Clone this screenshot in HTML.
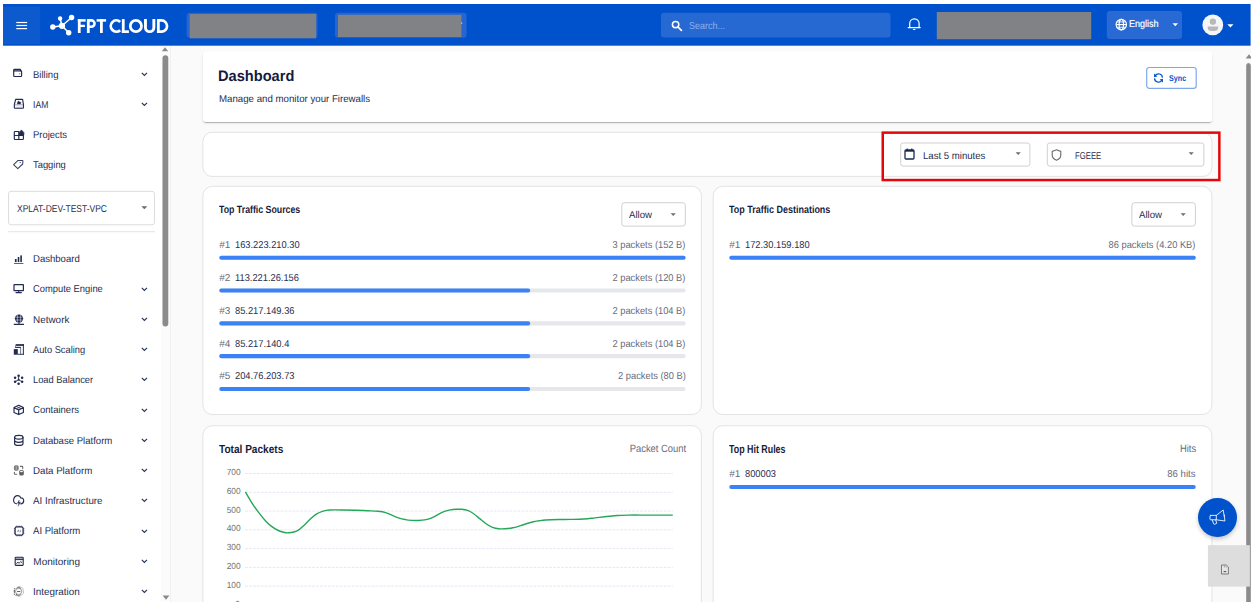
<!DOCTYPE html>
<html><head><meta charset="utf-8"><title>Dashboard</title>
<style>
html,body{margin:0;padding:0;background:#fff;}
body{width:1252px;height:608px;position:relative;overflow:hidden;font-family:"Liberation Sans",sans-serif;}
.b{position:absolute;box-sizing:border-box;display:block;}
.t{position:absolute;white-space:nowrap;line-height:1;font-family:"Liberation Sans",sans-serif;text-rendering:geometricPrecision;}
</style></head><body>
<svg class="b" style="left:2px;top:3px" width="1250" height="600"><rect x="1.00" y="1.00" width="1248.00" height="598.00" fill="#fafafa"/></svg>
<svg class="b" style="left:2px;top:45px" width="160" height="558"><rect x="1.00" y="1.00" width="158.00" height="556.00" fill="#fff"/></svg>
<div class="b" style="left:161.00px;top:46.00px;width:9.50px;height:556.00px;background:#fbfbfb;border-right:1px solid #f0f0f0;"></div>
<svg class="b" style="left:2px;top:3px" width="1250" height="44"><rect x="1.00" y="1.00" width="1247.60" height="41.70" fill="#0052cc"/></svg>
<svg class="b" style="left:2px;top:5px" width="40" height="40"><rect x="1.00" y="1.60" width="37.20" height="37.40" fill="#0d5acf"/></svg>
<svg class="b" style="left:15px;top:20px" width="14" height="5"><rect x="1.30" y="1.90" width="10.80" height="1.20" fill="#fff"/></svg>
<svg class="b" style="left:15px;top:23px" width="14" height="5"><rect x="1.30" y="1.90" width="10.80" height="1.20" fill="#fff"/></svg>
<svg class="b" style="left:15px;top:27px" width="14" height="4"><rect x="1.30" y="1.00" width="10.80" height="1.20" fill="#fff"/></svg>
<svg class="b" style="left:46px;top:10px" width="36" height="30" viewBox="46 10 36 30"><g stroke="#fff" stroke-width="1.5" fill="none"><line x1="62" y1="25.8" x2="71.6" y2="17.5"/><line x1="62" y1="25.8" x2="60.1" y2="18.5"/><line x1="62" y1="25.8" x2="52.8" y2="27"/><line x1="62" y1="25.8" x2="68.7" y2="32.7"/></g><g fill="#fff"><circle cx="62" cy="25.8" r="3.15"/><circle cx="71.6" cy="17.5" r="2.7"/><circle cx="60.1" cy="18.5" r="2.2"/><circle cx="52.8" cy="27" r="2.7"/><circle cx="68.7" cy="32.7" r="2.7"/></g></svg>
<svg class="b" style="left:74px;top:14px" width="100" height="24" viewBox="74 14 100 24"><g fill="none" stroke="#fff" stroke-width="2.8"><path d="M79.25 19.1 V33"/><path d="M77.85 20.4 H85.7" stroke-width="2.5"/><path d="M79 25.9 H84.9" stroke-width="2.3"/><path d="M88.3 19.1 V33"/><path d="M88.3 20.4 H91.4 A3.15 3.15 0 0 1 91.4 26.7 H88.3" stroke-width="2.6"/><path d="M96.6 20.4 H106.1" stroke-width="2.5"/><path d="M101.4 19.1 V33"/><path d="M120.14 21.95 A5.55 5.6 0 1 0 120.14 30.15"/><path d="M123.25 19.1 V33"/><path d="M121.85 31.65 H128.9" stroke-width="2.7"/><ellipse cx="135.9" cy="26.05" rx="5.6" ry="5.65"/><path d="M145.45 19.1 V27.4 A4.2 4.25 0 0 0 153.85 27.4 V19.1" stroke-width="2.9"/><path d="M158.35 19.1 V33"/><path d="M158.35 20.45 H161.5 A5.55 5.6 0 0 1 161.5 31.65 H158.35" stroke-width="2.7"/></g></svg>
<svg class="b" style="left:185px;top:11px" width="134" height="28"><rect x="1.60" y="1.80" width="130.90" height="25.00" fill="#2566d3" rx="3.00"/></svg>
<svg class="b" style="left:188px;top:13px" width="130" height="27"><rect x="1.70" y="1.00" width="126.50" height="24.30" fill="#808285"/></svg>
<svg class="b" style="left:334px;top:11px" width="134" height="28"><rect x="1.00" y="1.80" width="131.50" height="25.00" fill="#2566d3" rx="3.00"/></svg>
<svg class="b" style="left:337px;top:13px" width="126" height="25"><rect x="1.00" y="1.80" width="123.40" height="22.20" fill="#808285"/></svg>
<svg class="b" style="left:460px;top:21px" width="4" height="4"><rect x="1.20" y="1.50" width="1.00" height="1.20" fill="#dfe8f8"/></svg>
<svg class="b" style="left:660px;top:11px" width="232" height="28"><rect x="1.00" y="1.80" width="229.50" height="24.80" fill="#2769d3" rx="3.00"/></svg>
<svg class="b" style="left:671.00px;top:19.50px;" width="12" height="12" viewBox="0 0 12 12"><circle cx="4.6" cy="4.6" r="3.2" fill="none" stroke="#fff" stroke-width="1.5"/><line x1="7" y1="7" x2="10.4" y2="10.4" stroke="#fff" stroke-width="1.7" stroke-linecap="round"/></svg>
<div class="t" style="left:689.40px;transform-origin:0 0;top:21px;font-size:10px;font-weight:400;color:#8fb1ea;transform:scaleX(0.8995);line-height:11px;">Search...</div>
<svg class="b" style="left:904px;top:14px" width="22" height="20" viewBox="904 14 22 20"><path d="M909.7 27.6 V23.5 a4.7 4.7 0 0 1 9.4 0 V27.6 M908.2 27.6 H920.2" fill="none" stroke="#fff" stroke-width="1.2" stroke-linecap="round"/><path d="M912.9 28.9 H915.5 a1.3 1.2 0 0 1 -2.6 0 Z" fill="#fff"/></svg>
<svg class="b" style="left:935px;top:11px" width="158" height="30"><rect x="1.80" y="1.00" width="154.40" height="27.20" fill="#808285"/></svg>
<svg class="b" style="left:1105px;top:10px" width="78" height="30"><rect x="1.80" y="1.00" width="75.20" height="27.90" fill="#2869d4" rx="3.00"/></svg>
<svg class="b" style="left:1115.00px;top:18.00px;" width="13" height="13" viewBox="0 0 13 13"><g fill="none" stroke="#fff" stroke-width="1.15"><circle cx="6.3" cy="6.6" r="5.2"/><ellipse cx="6.3" cy="6.6" rx="2.2" ry="5.2"/><line x1="1.1" y1="6.6" x2="11.5" y2="6.6"/><path d="M1.9 3.9 H10.7 M1.9 9.3 H10.7" stroke-width="0.9"/></g></svg>
<div class="t" style="left:1128.50px;transform-origin:0 0;top:19px;font-size:9.9px;font-weight:400;color:#fff;transform:scaleX(0.9116);-webkit-text-stroke:0.2px #fff;line-height:11px;">English</div>
<svg class="b" style="left:1172.00px;top:22.80px;" width="7" height="4" viewBox="0 0 7 4"><path d="M0.5 0.3 H6.1 L3.3 3.2 Z" fill="#fff"/></svg>
<svg class="b" style="left:1200px;top:12px" width="26" height="26" viewBox="1200 12 26 26"><circle cx="1212.8" cy="24.95" r="10.4" fill="#f4f5f7"/><circle cx="1212.9" cy="21.7" r="3.15" fill="#b8b8b8"/><path d="M1207.7 26.5 H1218.1 V27.6 A4 3.5 0 0 1 1214.1 31.1 H1211.7 A4 3.5 0 0 1 1207.7 27.6 Z" fill="#b8b8b8"/></svg>
<svg class="b" style="left:1226.60px;top:23.60px;" width="8" height="5" viewBox="0 0 8 5"><path d="M0.3 0.3 H6.5 L3.4 3.4 Z" fill="#fff"/></svg>
<svg class="b" style="left:161.40px;top:46.80px;" width="8" height="5" viewBox="0 0 8 5"><path d="M4 0.3 L7.2 4.3 H0.8 Z" fill="#8a8a8a"/></svg>
<svg class="b" style="left:161px;top:54px" width="9" height="274"><rect x="1.50" y="1.20" width="5.80" height="271.40" fill="#8b8b8b" rx="3.00"/></svg>
<svg class="b" style="left:161.50px;top:594.80px;" width="8" height="5" viewBox="0 0 8 5"><path d="M0.6 0.4 H7.4 L4 4.8 Z" fill="#8a8a8a"/></svg>
<div class="t" style="left:33.30px;transform-origin:0 0;top:70px;font-size:10px;font-weight:400;color:#272e4e;transform:scaleX(0.9557);line-height:11px;">Billing</div>
<svg class="b" style="left:141.20px;top:71.90px;" width="7" height="5" viewBox="0 0 7 5"><path d="M0.8 0.9 L3.4 3.5 L6 0.9" fill="none" stroke="#253858" stroke-width="1.2"/></svg>
<div class="t" style="left:33.30px;transform-origin:0 0;top:100px;font-size:10px;font-weight:400;color:#272e4e;transform:scaleX(0.8606);line-height:11px;">IAM</div>
<svg class="b" style="left:141.20px;top:101.97px;" width="7" height="5" viewBox="0 0 7 5"><path d="M0.8 0.9 L3.4 3.5 L6 0.9" fill="none" stroke="#253858" stroke-width="1.2"/></svg>
<div class="t" style="left:33.30px;transform-origin:0 0;top:130px;font-size:10px;font-weight:400;color:#272e4e;transform:scaleX(0.9412);line-height:11px;">Projects</div>
<div class="t" style="left:33.30px;transform-origin:0 0;top:160px;font-size:10px;font-weight:400;color:#272e4e;transform:scaleX(0.9363);line-height:11px;">Tagging</div>
<div class="t" style="left:33.30px;transform-origin:0 0;top:254px;font-size:10px;font-weight:400;color:#272e4e;transform:scaleX(0.9546);line-height:11px;">Dashboard</div>
<div class="t" style="left:33.30px;transform-origin:0 0;top:284px;font-size:10px;font-weight:400;color:#272e4e;transform:scaleX(0.9370);line-height:11px;">Compute Engine</div>
<svg class="b" style="left:141.20px;top:286.55px;" width="7" height="5" viewBox="0 0 7 5"><path d="M0.8 0.9 L3.4 3.5 L6 0.9" fill="none" stroke="#253858" stroke-width="1.2"/></svg>
<div class="t" style="left:33.30px;transform-origin:0 0;top:315px;font-size:10px;font-weight:400;color:#272e4e;transform:scaleX(0.9925);line-height:11px;">Network</div>
<svg class="b" style="left:141.20px;top:316.79px;" width="7" height="5" viewBox="0 0 7 5"><path d="M0.8 0.9 L3.4 3.5 L6 0.9" fill="none" stroke="#253858" stroke-width="1.2"/></svg>
<div class="t" style="left:33.30px;transform-origin:0 0;top:345px;font-size:10px;font-weight:400;color:#272e4e;transform:scaleX(0.9279);line-height:11px;">Auto Scaling</div>
<svg class="b" style="left:141.20px;top:347.04px;" width="7" height="5" viewBox="0 0 7 5"><path d="M0.8 0.9 L3.4 3.5 L6 0.9" fill="none" stroke="#253858" stroke-width="1.2"/></svg>
<div class="t" style="left:33.30px;transform-origin:0 0;top:375px;font-size:10px;font-weight:400;color:#272e4e;transform:scaleX(0.9319);line-height:11px;">Load Balancer</div>
<svg class="b" style="left:141.20px;top:377.28px;" width="7" height="5" viewBox="0 0 7 5"><path d="M0.8 0.9 L3.4 3.5 L6 0.9" fill="none" stroke="#253858" stroke-width="1.2"/></svg>
<div class="t" style="left:33.30px;transform-origin:0 0;top:405px;font-size:10px;font-weight:400;color:#272e4e;transform:scaleX(0.9532);line-height:11px;">Containers</div>
<svg class="b" style="left:141.20px;top:407.52px;" width="7" height="5" viewBox="0 0 7 5"><path d="M0.8 0.9 L3.4 3.5 L6 0.9" fill="none" stroke="#253858" stroke-width="1.2"/></svg>
<div class="t" style="left:33.30px;transform-origin:0 0;top:436px;font-size:10px;font-weight:400;color:#272e4e;transform:scaleX(0.9575);line-height:11px;">Database Platform</div>
<svg class="b" style="left:141.20px;top:437.77px;" width="7" height="5" viewBox="0 0 7 5"><path d="M0.8 0.9 L3.4 3.5 L6 0.9" fill="none" stroke="#253858" stroke-width="1.2"/></svg>
<div class="t" style="left:33.30px;transform-origin:0 0;top:466px;font-size:10px;font-weight:400;color:#272e4e;transform:scaleX(0.9684);line-height:11px;">Data Platform</div>
<svg class="b" style="left:141.20px;top:468.01px;" width="7" height="5" viewBox="0 0 7 5"><path d="M0.8 0.9 L3.4 3.5 L6 0.9" fill="none" stroke="#253858" stroke-width="1.2"/></svg>
<div class="t" style="left:33.30px;transform-origin:0 0;top:496px;font-size:10px;font-weight:400;color:#272e4e;transform:scaleX(0.9770);line-height:11px;">AI Infrastructure</div>
<svg class="b" style="left:141.20px;top:498.26px;" width="7" height="5" viewBox="0 0 7 5"><path d="M0.8 0.9 L3.4 3.5 L6 0.9" fill="none" stroke="#253858" stroke-width="1.2"/></svg>
<div class="t" style="left:33.30px;transform-origin:0 0;top:526px;font-size:10px;font-weight:400;color:#272e4e;transform:scaleX(0.9563);line-height:11px;">AI Platform</div>
<svg class="b" style="left:141.20px;top:528.50px;" width="7" height="5" viewBox="0 0 7 5"><path d="M0.8 0.9 L3.4 3.5 L6 0.9" fill="none" stroke="#253858" stroke-width="1.2"/></svg>
<div class="t" style="left:33.30px;transform-origin:0 0;top:557px;font-size:10px;font-weight:400;color:#272e4e;line-height:11px;">Monitoring</div>
<svg class="b" style="left:141.20px;top:558.75px;" width="7" height="5" viewBox="0 0 7 5"><path d="M0.8 0.9 L3.4 3.5 L6 0.9" fill="none" stroke="#253858" stroke-width="1.2"/></svg>
<div class="t" style="left:33.30px;transform-origin:0 0;top:587px;font-size:10px;font-weight:400;color:#272e4e;transform:scaleX(0.9882);line-height:11px;">Integration</div>
<svg class="b" style="left:141.20px;top:589.00px;" width="7" height="5" viewBox="0 0 7 5"><path d="M0.8 0.9 L3.4 3.5 L6 0.9" fill="none" stroke="#253858" stroke-width="1.2"/></svg>
<svg class="b" style="left:7px;top:189px" width="149" height="38"><rect x="1.60" y="2.30" width="145.90" height="33.50" fill="#fff" rx="2.50" stroke="#dcdcdc" stroke-width="1.0"/></svg>
<div class="t" style="left:17.00px;transform-origin:0 0;top:204px;font-size:10px;font-weight:400;color:#272e4e;transform:scaleX(0.8494);line-height:11px;">XPLAT-DEV-TEST-VPC</div>
<svg class="b" style="left:140.50px;top:206.00px;" width="7" height="4" viewBox="0 0 7 4"><path d="M0.3 0.2 H6.3 L3.3 3.3 Z" fill="#6b6b6b"/></svg>
<svg class="b" style="left:7px;top:230px" width="149" height="4"><rect x="1.10" y="1.20" width="146.90" height="1.00" fill="#e4e4e8"/></svg>
<svg class="b" style="left:1245px;top:45px" width="7" height="558"><rect x="1.00" y="1.00" width="5.00" height="556.00" fill="#fafafa"/></svg>
<svg class="b" style="left:1244.50px;top:54.30px;" width="8" height="5" viewBox="0 0 8 5"><path d="M4 0.2 L7.4 4.6 H0.6 Z" fill="#8a8a8a"/></svg>
<svg class="b" style="left:1245px;top:62px" width="7" height="546"><rect x="1.20" y="1.00" width="4.60" height="544.00" fill="#8b8b8b" rx="2.50"/></svg>
<div class="b" style="left:203px;top:53px;width:1009px;height:69px;border-radius:3px;box-shadow:0 2px 1px -1px rgba(0,0,0,.15),0 1px 1px 0 rgba(0,0,0,.11),0 1px 3px 0 rgba(0,0,0,.11);"></div>
<svg class="b" style="left:202px;top:50px" width="1012" height="73"><rect x="1.10" y="1.50" width="1009.10" height="70.30" fill="#fff" rx="3.00"/></svg>
<div class="t" style="left:217.90px;transform-origin:0 0;top:68px;font-size:15.2px;font-weight:700;color:#141b3c;transform:scaleX(0.9623);line-height:17px;">Dashboard</div>
<div class="t" style="left:218.60px;transform-origin:0 0;top:94px;font-size:10px;font-weight:400;color:#272e4e;transform:scaleX(0.9674);line-height:11px;">Manage and monitor your Firewalls</div>
<svg class="b" style="left:1145px;top:65px" width="53" height="25"><rect x="1.70" y="2.50" width="49.50" height="20.80" fill="#fff" rx="2.60" stroke="#7fa8ec" stroke-width="1.2"/></svg>
<svg class="b" style="left:1150px;top:70px" width="18" height="16" viewBox="1150 70 18 16"><g fill="none" stroke="#0052cc" stroke-width="1.25"><path d="M1162.5 77.6 A4 4 0 0 0 1155.2 75.6"/><path d="M1154.5 78.4 A4 4 0 0 0 1161.8 80.4"/></g><path d="M1154 73.6 L1154.1 77.2 L1157.3 76.4 Z" fill="#0052cc"/><path d="M1163 82.4 L1162.9 78.8 L1159.7 79.6 Z" fill="#0052cc"/></svg>
<div class="t" style="left:1168.60px;transform-origin:0 0;top:73px;font-size:8.4px;font-weight:700;color:#0052cc;transform:scaleX(0.8567);line-height:10px;">Sync</div>
<svg class="b" style="left:201px;top:130px" width="1013" height="48"><rect x="1.90" y="2.30" width="1009.00" height="44.10" fill="#fff" rx="9.00" stroke="#e3e3e3" stroke-width="1.0"/></svg>
<svg class="b" style="left:899px;top:141px" width="133" height="27"><rect x="1.70" y="2.00" width="129.20" height="23.10" fill="#fff" rx="2.50" stroke="#d0d0d0" stroke-width="1.0"/></svg>
<svg class="b" style="left:904.00px;top:148.40px;" width="11" height="12" viewBox="0 0 11 12"><rect x="1" y="2" width="9" height="9" rx="1" fill="none" stroke="#172b4d" stroke-width="1.3"/><rect x="1" y="2" width="9" height="1.7" fill="#172b4d"/><line x1="3.2" y1="0.4" x2="3.2" y2="2.5" stroke="#172b4d" stroke-width="1.2"/><line x1="7.8" y1="0.4" x2="7.8" y2="2.5" stroke="#172b4d" stroke-width="1.2"/></svg>
<div class="t" style="left:923.20px;transform-origin:0 0;top:151px;font-size:10px;font-weight:400;color:#272e4e;transform:scaleX(0.9595);line-height:11px;">Last 5 minutes</div>
<svg class="b" style="left:1014.80px;top:151.80px;" width="7" height="4" viewBox="0 0 7 4"><path d="M0.6 0.2 H5.8 L3.2 3 Z" fill="#6e6e6e"/></svg>
<svg class="b" style="left:1045px;top:141px" width="161" height="27"><rect x="2.30" y="2.00" width="156.60" height="23.10" fill="#fff" rx="2.50" stroke="#d0d0d0" stroke-width="1.0"/></svg>
<svg class="b" style="left:1050.60px;top:148.60px;" width="11" height="12" viewBox="0 0 11 12"><path d="M5.5 0.8 L9.8 2.4 V6 C9.8 8.6 7.8 10.4 5.5 11.2 C3.2 10.4 1.2 8.6 1.2 6 V2.4 Z" fill="none" stroke="#6b6b6b" stroke-width="1.1"/></svg>
<div class="t" style="left:1074.70px;transform-origin:0 0;top:151px;font-size:10px;font-weight:400;color:#272e4e;transform:scaleX(0.7729);line-height:11px;">FGEEE</div>
<svg class="b" style="left:1188.30px;top:151.80px;" width="7" height="4" viewBox="0 0 7 4"><path d="M0.6 0.2 H5.8 L3.2 3 Z" fill="#6e6e6e"/></svg>
<svg class="b" style="left:880px;top:130px" width="342" height="53"><rect x="2.75" y="2.65" width="336.60" height="47.40" fill="none" stroke="#e3070b" stroke-width="2.5"/></svg>
<svg class="b" style="left:201px;top:184px" width="502" height="232"><rect x="1.90" y="2.30" width="498.50" height="228.20" fill="#fff" rx="9.50" stroke="#e3e3e3" stroke-width="1.0"/></svg>
<div class="t" style="left:219.30px;transform-origin:0 0;top:204px;font-size:10.5px;font-weight:700;color:#141b3c;transform:scaleX(0.8350);line-height:12px;">Top Traffic Sources</div>
<svg class="b" style="left:620px;top:201px" width="67" height="27"><rect x="1.80" y="1.70" width="63.50" height="23.40" fill="#fff" rx="2.70" stroke="#d0d0d0" stroke-width="1.0"/></svg>
<div class="t" style="left:629.20px;transform-origin:0 0;top:210px;font-size:10px;font-weight:400;color:#272e4e;transform:scaleX(0.9624);line-height:11px;">Allow</div>
<svg class="b" style="left:669.80px;top:212.60px;" width="7" height="4" viewBox="0 0 7 4"><path d="M0.6 0.2 H5.8 L3.2 3 Z" fill="#6e6e6e"/></svg>
<div class="t" style="left:219.30px;transform-origin:0 0;top:240px;font-size:10px;font-weight:400;color:#666b7c;line-height:11px;">#1</div>
<div class="t" style="left:234.50px;transform-origin:0 0;top:240px;font-size:10px;font-weight:400;color:#272e4e;transform:scaleX(0.9300);line-height:11px;">163.223.210.30</div>
<div class="t" style="right:566.40px;transform-origin:100% 0;top:240px;font-size:10px;font-weight:400;color:#666b7c;transform:scaleX(0.9300);line-height:11px;">3 packets (152 B)</div>
<svg class="b" style="left:218px;top:254px" width="469" height="7"><rect x="1.30" y="1.70" width="466.30" height="4.10" fill="#e5e7eb" rx="2.00"/></svg>
<svg class="b" style="left:218px;top:254px" width="469" height="7"><rect x="1.30" y="1.70" width="466.30" height="4.10" fill="#3b82f6" rx="2.00"/></svg>
<div class="t" style="left:219.30px;transform-origin:0 0;top:273px;font-size:10px;font-weight:400;color:#666b7c;line-height:11px;">#2</div>
<div class="t" style="left:234.50px;transform-origin:0 0;top:273px;font-size:10px;font-weight:400;color:#272e4e;transform:scaleX(0.9300);line-height:11px;">113.221.26.156</div>
<div class="t" style="right:566.40px;transform-origin:100% 0;top:273px;font-size:10px;font-weight:400;color:#666b7c;transform:scaleX(0.9300);line-height:11px;">2 packets (120 B)</div>
<svg class="b" style="left:218px;top:287px" width="469" height="7"><rect x="1.30" y="1.50" width="466.30" height="4.10" fill="#e5e7eb" rx="2.00"/></svg>
<svg class="b" style="left:218px;top:287px" width="314" height="7"><rect x="1.30" y="1.50" width="310.87" height="4.10" fill="#3b82f6" rx="2.00"/></svg>
<div class="t" style="left:219.30px;transform-origin:0 0;top:306px;font-size:10px;font-weight:400;color:#666b7c;line-height:11px;">#3</div>
<div class="t" style="left:234.50px;transform-origin:0 0;top:306px;font-size:10px;font-weight:400;color:#272e4e;transform:scaleX(0.9300);line-height:11px;">85.217.149.36</div>
<div class="t" style="right:566.40px;transform-origin:100% 0;top:306px;font-size:10px;font-weight:400;color:#666b7c;transform:scaleX(0.9300);line-height:11px;">2 packets (104 B)</div>
<svg class="b" style="left:218px;top:320px" width="469" height="7"><rect x="1.30" y="1.30" width="466.30" height="4.10" fill="#e5e7eb" rx="2.00"/></svg>
<svg class="b" style="left:218px;top:320px" width="314" height="7"><rect x="1.30" y="1.30" width="310.87" height="4.10" fill="#3b82f6" rx="2.00"/></svg>
<div class="t" style="left:219.30px;transform-origin:0 0;top:339px;font-size:10px;font-weight:400;color:#666b7c;line-height:11px;">#4</div>
<div class="t" style="left:234.50px;transform-origin:0 0;top:339px;font-size:10px;font-weight:400;color:#272e4e;transform:scaleX(0.9300);line-height:11px;">85.217.140.4</div>
<div class="t" style="right:566.40px;transform-origin:100% 0;top:339px;font-size:10px;font-weight:400;color:#666b7c;transform:scaleX(0.9300);line-height:11px;">2 packets (104 B)</div>
<svg class="b" style="left:218px;top:353px" width="469" height="7"><rect x="1.30" y="1.10" width="466.30" height="4.10" fill="#e5e7eb" rx="2.00"/></svg>
<svg class="b" style="left:218px;top:353px" width="314" height="7"><rect x="1.30" y="1.10" width="310.87" height="4.10" fill="#3b82f6" rx="2.00"/></svg>
<div class="t" style="left:219.30px;transform-origin:0 0;top:371px;font-size:10px;font-weight:400;color:#666b7c;line-height:11px;">#5</div>
<div class="t" style="left:234.50px;transform-origin:0 0;top:371px;font-size:10px;font-weight:400;color:#272e4e;transform:scaleX(0.9300);line-height:11px;">204.76.203.73</div>
<div class="t" style="right:566.40px;transform-origin:100% 0;top:371px;font-size:10px;font-weight:400;color:#666b7c;transform:scaleX(0.9300);line-height:11px;">2 packets (80 B)</div>
<svg class="b" style="left:218px;top:385px" width="469" height="7"><rect x="1.30" y="1.90" width="466.30" height="4.10" fill="#e5e7eb" rx="2.00"/></svg>
<svg class="b" style="left:218px;top:385px" width="314" height="7"><rect x="1.30" y="1.90" width="310.87" height="4.10" fill="#3b82f6" rx="2.00"/></svg>
<svg class="b" style="left:711px;top:184px" width="503" height="232"><rect x="2.20" y="2.30" width="498.70" height="228.20" fill="#fff" rx="9.50" stroke="#e3e3e3" stroke-width="1.0"/></svg>
<div class="t" style="left:729.30px;transform-origin:0 0;top:204px;font-size:10.5px;font-weight:700;color:#141b3c;transform:scaleX(0.8525);line-height:12px;">Top Traffic Destinations</div>
<svg class="b" style="left:1130px;top:201px" width="67" height="27"><rect x="1.90" y="1.70" width="63.50" height="23.40" fill="#fff" rx="2.70" stroke="#d0d0d0" stroke-width="1.0"/></svg>
<div class="t" style="left:1139.40px;transform-origin:0 0;top:210px;font-size:10px;font-weight:400;color:#272e4e;transform:scaleX(0.9624);line-height:11px;">Allow</div>
<svg class="b" style="left:1179.90px;top:212.60px;" width="7" height="4" viewBox="0 0 7 4"><path d="M0.6 0.2 H5.8 L3.2 3 Z" fill="#6e6e6e"/></svg>
<div class="t" style="left:729.30px;transform-origin:0 0;top:240px;font-size:10px;font-weight:400;color:#666b7c;line-height:11px;">#1</div>
<div class="t" style="left:744.50px;transform-origin:0 0;top:240px;font-size:10px;font-weight:400;color:#272e4e;transform:scaleX(0.9300);line-height:11px;">172.30.159.180</div>
<div class="t" style="right:56.20px;transform-origin:100% 0;top:240px;font-size:10px;font-weight:400;color:#666b7c;transform:scaleX(0.9300);line-height:11px;">86 packets (4.20 KB)</div>
<svg class="b" style="left:728px;top:254px" width="469" height="7"><rect x="1.30" y="1.70" width="466.50" height="4.10" fill="#e5e7eb" rx="2.00"/></svg>
<svg class="b" style="left:728px;top:254px" width="469" height="7"><rect x="1.30" y="1.70" width="466.50" height="4.10" fill="#3b82f6" rx="2.00"/></svg>
<svg class="b" style="left:201px;top:424px" width="502" height="217"><rect x="1.90" y="1.70" width="498.50" height="213.80" fill="#fff" rx="9.50" stroke="#e3e3e3" stroke-width="1.0"/></svg>
<div class="t" style="left:219.10px;transform-origin:0 0;top:444px;font-size:11.6px;font-weight:700;color:#141b3c;transform:scaleX(0.8697);line-height:12px;">Total Packets</div>
<div class="t" style="right:566.20px;transform-origin:100% 0;top:443px;font-size:10.5px;font-weight:400;color:#666b7c;transform:scaleX(0.8931);line-height:12px;">Packet Count</div>
<svg class="b" style="left:711px;top:424px" width="503" height="217"><rect x="2.20" y="1.70" width="498.70" height="213.80" fill="#fff" rx="9.50" stroke="#e3e3e3" stroke-width="1.0"/></svg>
<div class="t" style="left:729.30px;transform-origin:0 0;top:444px;font-size:11.6px;font-weight:700;color:#141b3c;transform:scaleX(0.7646);line-height:12px;">Top Hit Rules</div>
<div class="t" style="right:56.30px;transform-origin:100% 0;top:443px;font-size:10.5px;font-weight:400;color:#666b7c;transform:scaleX(0.8959);line-height:12px;">Hits</div>
<div class="t" style="left:729.30px;transform-origin:0 0;top:469px;font-size:10px;font-weight:400;color:#666b7c;line-height:11px;">#1</div>
<div class="t" style="left:744.50px;transform-origin:0 0;top:469px;font-size:10px;font-weight:400;color:#272e4e;transform:scaleX(0.9300);line-height:11px;">800003</div>
<div class="t" style="right:56.30px;transform-origin:100% 0;top:469px;font-size:10px;font-weight:400;color:#666b7c;transform:scaleX(0.9571);line-height:11px;">86 hits</div>
<svg class="b" style="left:728px;top:484px" width="469" height="7"><rect x="1.30" y="1.00" width="466.40" height="4.10" fill="#e5e7eb" rx="2.00"/></svg>
<svg class="b" style="left:728px;top:484px" width="469" height="7"><rect x="1.30" y="1.00" width="466.40" height="4.10" fill="#3b82f6" rx="2.00"/></svg>
<div class="t" style="right:1011.80px;transform-origin:100% 0;top:467px;font-size:8.8px;font-weight:400;color:#707070;transform:scaleX(0.9550);line-height:10px;">700</div>
<div class="t" style="right:1011.80px;transform-origin:100% 0;top:486px;font-size:8.8px;font-weight:400;color:#707070;transform:scaleX(0.9550);line-height:10px;">600</div>
<div class="t" style="right:1011.80px;transform-origin:100% 0;top:505px;font-size:8.8px;font-weight:400;color:#707070;transform:scaleX(0.9550);line-height:10px;">500</div>
<div class="t" style="right:1011.80px;transform-origin:100% 0;top:523px;font-size:8.8px;font-weight:400;color:#707070;transform:scaleX(0.9550);line-height:10px;">400</div>
<div class="t" style="right:1011.80px;transform-origin:100% 0;top:542px;font-size:8.8px;font-weight:400;color:#707070;transform:scaleX(0.9550);line-height:10px;">300</div>
<div class="t" style="right:1011.80px;transform-origin:100% 0;top:561px;font-size:8.8px;font-weight:400;color:#707070;transform:scaleX(0.9550);line-height:10px;">200</div>
<div class="t" style="right:1011.80px;transform-origin:100% 0;top:580px;font-size:8.8px;font-weight:400;color:#707070;transform:scaleX(0.9550);line-height:10px;">100</div>
<div class="t" style="right:1011.80px;transform-origin:100% 0;top:599px;font-size:8.8px;font-weight:400;color:#707070;transform:scaleX(0.9550);line-height:10px;">0</div>
<svg class="b" style="left:0;top:0" width="1252" height="608" viewBox="0 0 1252 608"><line x1="245" y1="473.50" x2="672.8" y2="473.50" stroke="#e6e9f4" stroke-width="1" stroke-dasharray="2.9 1.05"/><line x1="245" y1="492.28" x2="672.8" y2="492.28" stroke="#e6e9f4" stroke-width="1" stroke-dasharray="2.9 1.05"/><line x1="245" y1="511.06" x2="672.8" y2="511.06" stroke="#e6e9f4" stroke-width="1" stroke-dasharray="2.9 1.05"/><line x1="245" y1="529.84" x2="672.8" y2="529.84" stroke="#e6e9f4" stroke-width="1" stroke-dasharray="2.9 1.05"/><line x1="245" y1="548.62" x2="672.8" y2="548.62" stroke="#e6e9f4" stroke-width="1" stroke-dasharray="2.9 1.05"/><line x1="245" y1="567.40" x2="672.8" y2="567.40" stroke="#e6e9f4" stroke-width="1" stroke-dasharray="2.9 1.05"/><line x1="245" y1="586.18" x2="672.8" y2="586.18" stroke="#e6e9f4" stroke-width="1" stroke-dasharray="2.9 1.05"/><line x1="245" y1="604.96" x2="672.8" y2="604.96" stroke="#e6e9f4" stroke-width="1" stroke-dasharray="2.9 1.05"/><path d="M245.4 491.8 C246.6 493.9 250.5 500.7 252.8 504.3 C255.1 507.9 257.1 510.4 259.2 513.2 C261.3 516.0 263.5 518.7 265.6 520.9 C267.7 523.1 269.8 525.0 271.9 526.6 C274.0 528.2 276.2 529.5 278.3 530.5 C280.4 531.5 283.0 532.1 284.7 532.5 C286.4 532.9 287.1 532.9 288.6 532.8 C290.1 532.7 292.0 532.5 293.7 532.0 C295.4 531.5 297.1 530.9 298.8 529.8 C300.5 528.7 302.0 527.2 303.9 525.4 C305.8 523.6 308.2 520.9 310.3 519.0 C312.4 517.1 314.6 515.2 316.7 513.9 C318.8 512.6 321.0 511.8 323.1 511.1 C325.2 510.5 326.3 510.2 329.5 510.0 C332.7 509.8 337.9 509.9 342.2 510.0 C346.4 510.1 350.7 510.2 355.0 510.3 C359.3 510.4 364.0 510.5 367.8 510.7 C371.6 510.9 374.9 511.0 378.0 511.3 C381.1 511.6 383.9 512.1 386.4 512.8 C388.9 513.5 390.7 514.7 392.8 515.6 C394.9 516.5 397.1 517.4 399.2 518.1 C401.3 518.8 403.5 519.2 405.6 519.6 C407.7 520.0 409.9 520.2 412.0 520.4 C414.1 520.5 416.2 520.6 418.3 520.5 C420.4 520.4 422.6 520.3 424.7 519.9 C426.8 519.5 429.0 519.0 431.1 518.1 C433.2 517.2 435.4 515.9 437.5 514.8 C439.6 513.7 441.8 512.5 443.9 511.7 C446.0 510.9 448.2 510.3 450.3 509.9 C452.4 509.5 454.8 509.4 456.7 509.3 C458.6 509.2 459.9 509.1 461.8 509.3 C463.7 509.5 466.3 510.0 468.2 510.7 C470.1 511.4 471.4 512.2 473.3 513.5 C475.2 514.8 477.6 516.9 479.7 518.6 C481.8 520.3 484.0 522.2 486.1 523.7 C488.2 525.2 490.4 526.5 492.5 527.3 C494.6 528.1 496.7 528.5 498.8 528.7 C500.9 529.0 502.9 528.9 505.2 528.8 C507.5 528.6 510.3 528.3 512.9 527.8 C515.5 527.3 518.2 526.3 520.6 525.6 C523.0 524.9 524.9 524.1 527.0 523.5 C529.1 522.9 531.3 522.2 533.4 521.7 C535.5 521.2 537.5 521.0 539.5 520.7 C541.5 520.4 542.5 520.2 545.6 520.0 C548.7 519.8 554.0 519.6 558.3 519.5 C562.5 519.4 566.8 519.5 571.1 519.4 C575.4 519.3 580.5 519.2 583.9 519.0 C587.3 518.8 589.0 518.6 591.6 518.3 C594.2 518.0 596.2 517.8 599.2 517.4 C602.2 517.0 606.5 516.5 609.5 516.2 C612.5 515.9 613.9 515.7 617.1 515.5 C620.3 515.3 623.5 515.2 628.6 515.1 C633.7 515.0 640.4 515.1 647.8 515.1 C655.2 515.1 668.6 515.1 672.8 515.1" fill="none" stroke="#25a758" stroke-width="1.4"/></svg>
<svg class="b" style="left:-1px;top:601px" width="1254" height="8"><rect x="1.00" y="1.00" width="1252.00" height="6.00" fill="#fff"/></svg>
<svg class="b" style="left:1250px;top:-1px" width="3" height="610"><rect x="1.00" y="1.00" width="1.00" height="608.00" fill="#fff"/></svg>
<div class="b" style="left:1198.20px;top:497.50px;width:39.00px;height:39.20px;background:#0052cc;border-radius:50%;box-shadow:0 2px 4px rgba(0,0,0,.22);"></div>
<svg class="b" style="left:1198px;top:497px" width="40" height="40" viewBox="1198 497 40 40"><g fill="none" stroke="#fff" stroke-width="0.85" stroke-linejoin="round" stroke-linecap="round"><path d="M1210.6 515.4 H1216.3 L1223.2 510 L1225 521 L1216.3 519.8 H1210.6 a0.6 0.6 0 0 1 -0.6 -0.6 V516 a0.6 0.6 0 0 1 0.6 -0.6 Z"/><path d="M1216.3 515.4 V519.8"/><path d="M1212.2 519.9 L1213.8 524 a0.6 0.6 0 0 0 0.8 0.3 L1216.8 523.2 L1215.6 519.9"/><path d="M1224.3 515 L1224.6 516.2"/></g></svg>
<svg class="b" style="left:1206px;top:544px" width="45" height="44"><rect x="1.90" y="1.20" width="42.00" height="41.40" fill="#dddddd"/></svg>
<svg class="b" style="left:1218px;top:562px" width="14" height="16" viewBox="1218 562 14 16"><path d="M1221.5 565 H1226.3 L1228.4 567 V574 H1221.5 Z" fill="#e6e6e6" stroke="#707070" stroke-width="0.9" stroke-linejoin="round"/><path d="M1223.6 571.6 H1226.2" stroke="#555" stroke-width="1.1"/><path d="M1224.4 565.4 V567.4 M1226.2 566 V567.6" stroke="#888" stroke-width="0.7"/></svg>
<svg class="b" style="left:0;top:0" width="180" height="608" viewBox="0 0 180 608"><path d="M13.7 70.9 V70.2 a0.8 0.8 0 0 1 0.8 -0.8 H19.9 a0.7 0.7 0 0 1 0.7 0.7 V70.8" fill="none" stroke="#222a4d" stroke-width="1.15" stroke-linejoin="round" stroke-linecap="round"/><rect x="13.7" y="70.85" width="7.9" height="5.7" rx="0.7" fill="none" stroke="#222a4d" stroke-width="1.15" stroke-linejoin="round" stroke-linecap="round"/><circle cx="19.8" cy="73.8" r="0.5" fill="#222a4d"/><path d="M14.35 104.7 L15.65 99.4 H22.6 L23.45 104.7 V107.4 a0.85 0.85 0 0 1 -0.85 0.85 H15.2 a0.85 0.85 0 0 1 -0.85 -0.85 Z" fill="none" stroke="#222a4d" stroke-width="1.15" stroke-linejoin="round" stroke-linecap="round"/><path d="M14.6 104.85 H23.2" fill="none" stroke="#6a7090" stroke-width="0.7"/><path d="M16.2 107.25 H22.4" fill="none" stroke="#8a8fa8" stroke-width="0.55"/><path d="M17.3 103.9 L17.6 101.8 L18.8 100.9 L19.3 101.9 L20.9 102.2 L20.5 103.9 Z" fill="#222a4d" stroke="#222a4d" stroke-width="0.4" stroke-linejoin="round"/><path d="M18.8 131.5 H15 a0.7 0.7 0 0 0 -0.7 0.7 V138.8 a0.7 0.7 0 0 0 0.7 0.7 H22.7 a0.7 0.7 0 0 0 0.7 -0.7 V135.4 M14.3 135.5 H23.4 M18.8 131.5 V139.5" fill="none" stroke="#222a4d" stroke-width="1.15" stroke-linejoin="round" stroke-linecap="round"/><path d="M19.1 135.2 V132.6 L21.4 129.9 L23.9 132.4 V135.2 Z" fill="#222a4d" stroke="#222a4d" stroke-width="0.6" stroke-linejoin="round"/><path d="M17.8 160.6 L22.4 160.4 a0.5 0.5 0 0 1 0.5 0.5 L22.7 164 L17.8 168.6 L13.6 164.6 Z" fill="none" stroke="#3a4262" stroke-width="1.05" stroke-linejoin="round"/><path d="M19.6 162.6 H20.8" stroke="#3a4262" stroke-width="0.9" fill="none"/><rect x="14.9" y="259" width="1.7" height="3.1" fill="#222a4d"/><rect x="17.7" y="257" width="1.6" height="5.1" fill="#222a4d"/><rect x="20.3" y="255.4" width="1.6" height="6.7" fill="#222a4d"/><rect x="14" y="263" width="9.4" height="0.9" fill="#4b5272"/><rect x="14" y="284.6" width="9.4" height="6" rx="0.3" fill="none" stroke="#222a4d" stroke-width="1.2"/><path d="M18.7 290.8 V292.4 M15.6 292.6 H21.8" stroke="#222a4d" stroke-width="1.1" fill="none"/><circle cx="19" cy="318.6" r="4.2" fill="#222a4d"/><path d="M15.2 317.2 H22.8 M15.2 320 H22.8 M17.4 315 V322.4 M20.6 315 V322.4" stroke="#fff" stroke-width="0.55" fill="none" opacity="0.85"/><path d="M19 322.8 V324.3 M13.8 324.4 H24" stroke="#222a4d" stroke-width="1.1" fill="none"/><path d="M15.9 345 H23.85" stroke="#363c5e" stroke-width="1.9" fill="none"/><path d="M23.35 344.1 V354.7" stroke="#222a4d" stroke-width="1" fill="none"/><path d="M15.1 347.4 H20.9" stroke="#222a4d" stroke-width="1.1" fill="none"/><path d="M20.6 347.4 V354.2" stroke="#50567a" stroke-width="0.8" fill="none"/><path d="M16 344.2 L15.2 347.4" stroke="#50567a" stroke-width="0.7" fill="none"/><rect x="13.8" y="349.1" width="4" height="5.6" fill="#222a4d"/><path d="M17.6 354.3 H23.85" stroke="#222a4d" stroke-width="0.9"/><path d="M18.6 379.7 V376.2 M18.6 379.7 L15.5 381.5 M18.6 379.7 L21.7 381.5" stroke="#222a4d" stroke-width="0.9" fill="none"/><circle cx="18.6" cy="379.7" r="1" fill="#222a4d"/><circle cx="18.60" cy="375.65" r="1.25" fill="#222a4d"/><circle cx="22.11" cy="377.68" r="1.25" fill="#222a4d"/><circle cx="22.11" cy="381.72" r="1.25" fill="#222a4d"/><circle cx="18.60" cy="383.75" r="1.25" fill="#222a4d"/><circle cx="15.09" cy="381.72" r="1.25" fill="#222a4d"/><circle cx="15.09" cy="377.68" r="1.25" fill="#222a4d"/><path d="M18.7 405.3 L23.4 407.6 V412.4 L18.7 414.6 L14 412.4 V407.6 Z M14.2 407.7 L18.7 409.9 L23.2 407.7 M18.7 409.9 V414.4" fill="none" stroke="#222a4d" stroke-width="1.15" stroke-linejoin="round" stroke-linecap="round"/><path d="M16.3 406.5 L21 408.8 M21.1 406.5 L16.4 408.8" stroke="#222a4d" stroke-width="0.7" fill="none"/><ellipse cx="18.8" cy="437.2" rx="4.2" ry="1.9" fill="none" stroke="#222a4d" stroke-width="1.15" stroke-linejoin="round" stroke-linecap="round"/><path d="M14.6 437.2 V443.4 C14.6 444.6 16.4 445.4 18.8 445.4 C21.2 445.4 23 444.6 23 443.4 V437.2 M14.6 440.3 C14.6 441.5 16.4 442.3 18.8 442.3 C21.2 442.3 23 441.5 23 440.3" fill="none" stroke="#222a4d" stroke-width="1.15" stroke-linejoin="round" stroke-linecap="round"/><rect x="13.9" y="465.3" width="4.8" height="5.5" rx="1.7" fill="#7b7b7b"/><path d="M16.3 466 V470" stroke="#a5a5a5" stroke-width="1.2"/><rect x="19.2" y="470" width="4.6" height="5.5" rx="1.6" fill="#5f5f5f"/><ellipse cx="21.5" cy="471.6" rx="1.6" ry="0.75" fill="#f2f2f2"/><path d="M20.3 466.4 H22 a0.7 0.7 0 0 1 0.7 0.7 V468.6" fill="none" stroke="#6a6a6a" stroke-width="1.1" stroke-linecap="round"/><path d="M14.4 472.3 V473.6 a0.7 0.7 0 0 0 0.7 0.7 H16.7" fill="none" stroke="#6a6a6a" stroke-width="1.1" stroke-linecap="round"/><path d="M16.6 503.8 C14.4 503.6 13.4 501.8 13.6 499.9 C13.8 497.4 15.5 495.4 17.9 495.6 C19.4 495.7 20.4 496.7 20.8 497.9 C22.6 497.8 23.8 499.2 23.7 500.9 C23.6 502.5 22.4 503.8 20.8 503.8" fill="none" stroke="#222a4d" stroke-width="1.15" stroke-linecap="round"/><path d="M19.3 500 L17.3 503.2 H18.9 L18 506.2 L20.6 502.2 H18.8 Z" fill="#222a4d" stroke="#222a4d" stroke-width="0.3" stroke-linejoin="round"/><rect x="15.1" y="526.9" width="8" height="8.1" rx="1.6" fill="none" stroke="#222a4d" stroke-width="1.25"/><path d="M16.9 525.7 V526.6 M16.9 535.4 V536.3" stroke="#222a4d" stroke-width="0.9"/><path d="M19.1 525.7 V526.6 M19.1 535.4 V536.3" stroke="#222a4d" stroke-width="0.9"/><path d="M21.3 525.7 V526.6 M21.3 535.4 V536.3" stroke="#222a4d" stroke-width="0.9"/><path d="M13.9 528.7 H14.8 M23.4 528.7 H24.3" stroke="#222a4d" stroke-width="0.9"/><path d="M13.9 530.9 H14.8 M23.4 530.9 H24.3" stroke="#222a4d" stroke-width="0.9"/><path d="M13.9 533.1 H14.8 M23.4 533.1 H24.3" stroke="#222a4d" stroke-width="0.9"/><path d="M17.4 532.2 L18.4 529.8 L19.2 532.2 M20.6 529.8 V532.2" stroke="#5a6080" stroke-width="0.6" fill="none"/><rect x="15.2" y="557.3" width="8" height="8.1" rx="0.6" fill="none" stroke="#222a4d" stroke-width="1.1"/><path d="M15.2 559.6 H23.2" stroke="#222a4d" stroke-width="1"/><rect x="15.6" y="557.6" width="7.2" height="1.6" fill="#222a4d" opacity="0.45"/><path d="M16.4 563.8 L17.8 562 L19 563.4 L20.6 561.6 L22 562.6" fill="none" stroke="#222a4d" stroke-width="0.9"/><path d="M18.8 586.2 L22.9 588.4 L23.6 593.2 L19.6 596.6 L14.8 595.2 L13.6 590.4 Z" fill="none" stroke="#b5b5b5" stroke-width="0.8"/><circle cx="18.6" cy="591.4" r="3.1" fill="none" stroke="#8a8a8a" stroke-width="0.85"/><path d="M17 591.5 H20.4" stroke="#555" stroke-width="0.9"/><path d="M16.8 588.3 C18 587 19.8 587.2 20.8 588.4 M16.4 594.6 C17.6 595.8 19.6 595.8 20.6 594.6" fill="none" stroke="#666" stroke-width="0.9"/><path d="M14.5 590 V592.8" stroke="#666" stroke-width="0.9"/><circle cx="14.4" cy="588.5" r="0.55" fill="#555"/><circle cx="14.4" cy="594.3" r="0.55" fill="#555"/><path d="M16 594 L17 595.2" stroke="#555" stroke-width="0.9"/></svg>
</body></html>
